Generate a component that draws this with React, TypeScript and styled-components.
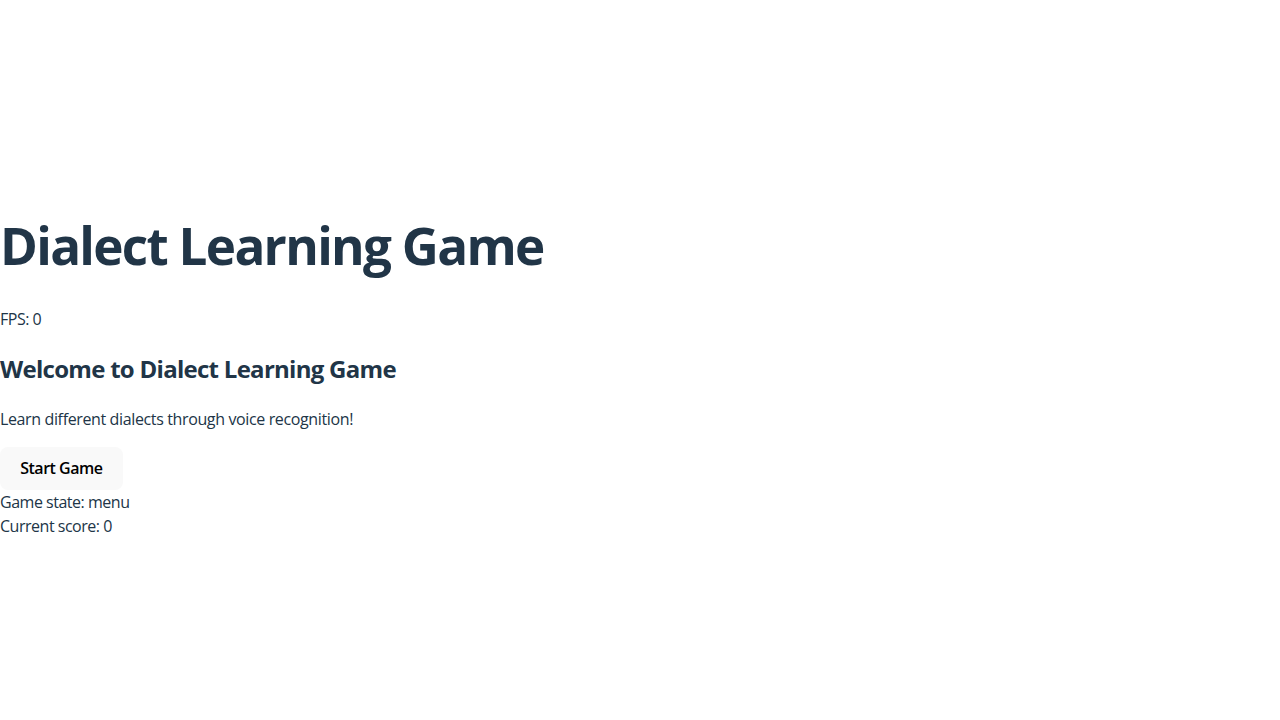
import React from "react";
import styled, { createGlobalStyle } from "styled-components";

const Global = createGlobalStyle`
  :root {
    font-family: "Open Sans", "Noto Sans", sans-serif;
    line-height: 1.5;
    font-weight: 400;
    color: #213547;
    background-color: #ffffff;
  }
  body {
    margin: 0;
    display: flex;
    place-items: center;
    min-width: 320px;
    min-height: 100vh;
  }
`;

const Wrapper = styled.div``;

const Title = styled.h1`
  font-size: 3.2em;
  line-height: 1.1;
  margin: 0.67em 0;
  font-weight: 700;
  letter-spacing: -0.033em;
`;

const Line = styled.div`
  font-size: 16px;
  letter-spacing: -0.03em;
`;

const Heading = styled.h2`
  font-size: 1.5em;
  margin: 0.83em 0;
  font-weight: 700;
  letter-spacing: -0.03em;
`;

const Para = styled.p`
  margin: 1em 0;
  letter-spacing: -0.023em;
`;

const Button = styled.button`
  border-radius: 8px;
  border: 1px solid transparent;
  padding: 0.6em 1.2em;
  font-size: 1em;
  font-weight: 600;
  font-family: inherit;
  line-height: 21.3px;
  background-color: #f9f9f9;
  color: #000;
  cursor: pointer;
  letter-spacing: -0.03em;
`;

export default function App() {
  return (
    <>
      <Global />
      <Wrapper>
        <Title>Dialect Learning Game</Title>
        <Line>FPS: 0</Line>
        <div>
          <Heading>Welcome to Dialect Learning Game</Heading>
          <Para>Learn different dialects through voice recognition!</Para>
          <Button>Start Game</Button>
        </div>
        <Line>Game state: menu</Line>
        <Line>Current score: 0</Line>
      </Wrapper>
    </>
  );
}
